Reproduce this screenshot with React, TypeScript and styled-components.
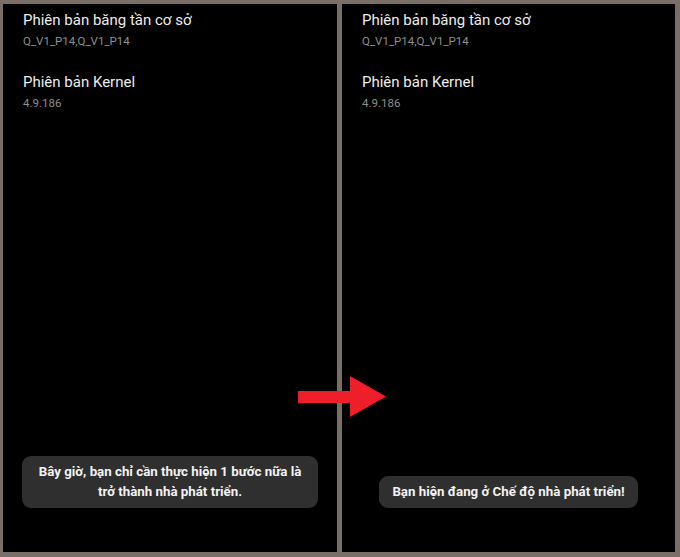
import { FC } from "react";
import styled, { createGlobalStyle } from "styled-components";

const GlobalStyle = createGlobalStyle`
  * { box-sizing: border-box; }
  html, body { margin: 0; padding: 0; background: #7a6f66; }
  body { font-family: Roboto, "Noto Sans", "Liberation Sans", sans-serif; }
`;

const Frame = styled.div`
  position: relative;
  width: 680px;
  height: 557px;
  background: #7a6f66;
  padding: 4px 5px 5px 3px;
  display: grid;
  grid-template-columns: 334px 333px;
  column-gap: 5px;
`;

const Panel = styled.div`
  background: #000;
  display: flex;
  flex-direction: column;
  padding: 6px 0 44px 20px;
`;

const Item = styled.div`
  display: flex;
  flex-direction: column;
  gap: 3px;
  margin-bottom: 23px;
`;

const Title = styled.div`
  color: #ececec;
  font-size: 15px;
  line-height: 20px;
`;

const Sub = styled.div`
  color: #8e8e8e;
  font-size: 11.5px;
  line-height: 16px;
`;

const Toast = styled.div<{ $width: number; $padY: number }>`
  margin-top: auto;
  align-self: center;
  margin-left: -20px;
  width: ${({ $width }) => $width}px;
  padding: ${({ $padY }) => $padY}px 8px;
  background: #2f2f2f;
  border-radius: 9px;
  color: #f2f2f2;
  font-size: 13.3px;
  font-weight: 700;
  line-height: 20px;
  text-align: center;
`;

const Arrow = styled.svg`
  position: absolute;
  left: 298px;
  top: 376px;
`;

interface IInfo {
  title: string;
  value: string;
}

const infos: IInfo[] = [
  { title: "Phiên bản băng tần cơ sở", value: "Q_V1_P14,Q_V1_P14" },
  { title: "Phiên bản Kernel", value: "4.9.186" },
];

const InfoList: FC = () => (
  <>
    {infos.map((info) => (
      <Item key={info.title}>
        <Title>{info.title}</Title>
        <Sub>{info.value}</Sub>
      </Item>
    ))}
  </>
);

const App: FC = () => (
  <>
    <GlobalStyle />
    <Frame>
      <Panel>
        <InfoList />
        <Toast $width={296} $padY={6}>
          Bây giờ, bạn chỉ cần thực hiện 1 bước nữa là
          <br />
          trở thành nhà phát triển.
        </Toast>
      </Panel>
      <Panel>
        <InfoList />
        <Toast $width={259} $padY={6}>
          Bạn hiện đang ở Chế độ nhà phát triển!
        </Toast>
      </Panel>
      <Arrow width="88" height="41" viewBox="0 0 88 41">
        <path d="M0 15 H52 V0 L88 20.5 L52 41 V27 H0 Z" fill="#ee1f2b" />
      </Arrow>
    </Frame>
  </>
);

export default App;
